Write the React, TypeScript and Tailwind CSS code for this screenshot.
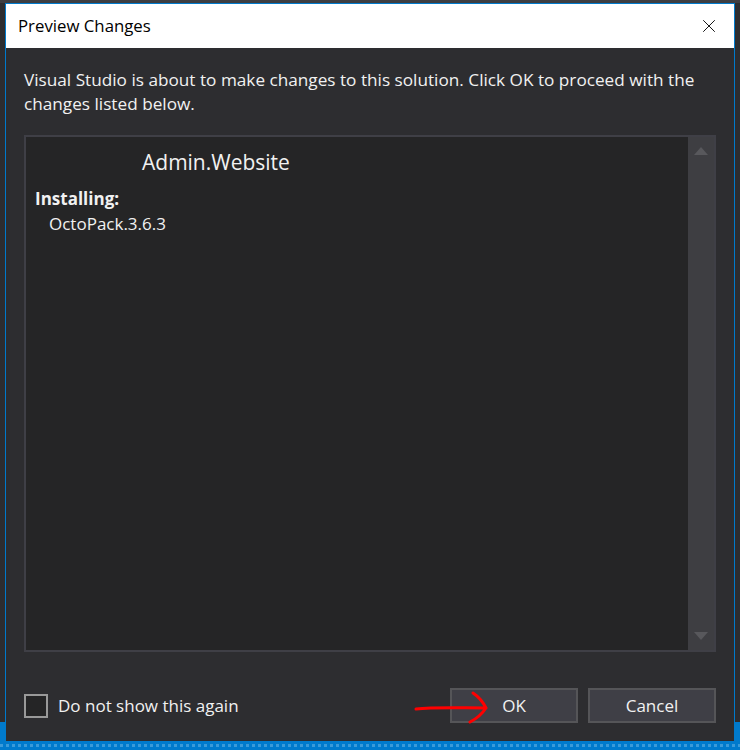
import { X } from "lucide-react";

const font = { fontFamily: '"Open Sans", "Noto Sans", sans-serif' };

function ScrollArrow({ down }: { down?: boolean }) {
  return (
    <svg width="14" height="8" viewBox="0 0 14 8" aria-hidden>
      <path d={down ? "M0 0 L14 0 L7 8 Z" : "M0 8 L14 8 L7 0 Z"} fill="#58585c" />
    </svg>
  );
}

export default function App() {
  return (
    <div
      className="relative h-[750px] w-[740px] overflow-hidden bg-[#2d2d30]"
      style={font}
    >
      {/* IDE behind the dialog */}
      <div className="absolute inset-x-0 top-0 h-[3px] bg-[#3e3e42]" />
      <div className="absolute bottom-0 left-0 right-0 h-[28px] bg-[#007acc]">
        <div className="absolute bottom-[3px] left-0 right-0 h-[3px] bg-[repeating-linear-gradient(90deg,#3a9ad9_0px,#3a9ad9_3px,#007acc_3px,#007acc_6px)]" />
      </div>

      <div className="relative ml-[5px] mt-[3px] flex h-[739px] w-[730px] flex-col border border-[#007acc]">
        {/* title bar */}
        <div className="flex h-[44px] shrink-0 items-center justify-between bg-white pl-[12px] pr-[14px]">
          <span className="text-[16.8px] text-black">Preview Changes</span>
          <X className="h-[22px] w-[22px] text-black" strokeWidth={1} />
        </div>

        {/* body */}
        <div className="flex flex-1 flex-col bg-[#2d2d30] px-[18px] pb-[18px] pt-[20px]">
          <p className="text-[17.2px] leading-[24px] text-[#f1f1f1]">
            Visual Studio is about to make changes to this solution. Click OK to proceed with the
            changes listed below.
          </p>

          <div className="mt-[19px] flex h-[517px] border-2 border-[#3f3f46] bg-[#252526]">
            <div className="flex-1 pt-[10px] text-[#f1f1f1]">
              <div className="pl-[116px] text-[21px] leading-[30px]">Admin.Website</div>
              <div className="mt-[10px] pl-[9px] text-[17px] font-bold leading-[24px]">
                Installing:
              </div>
              <div className="pl-[23px] text-[17px] leading-[26px]">OctoPack.3.6.3</div>
            </div>
            <div className="flex w-[26px] flex-col items-center justify-between bg-[#3e3e42] py-[10px]">
              <ScrollArrow />
              <ScrollArrow down />
            </div>
          </div>

          <div className="mt-auto flex items-center">
            <div className="flex items-center gap-[10px]">
              <div className="h-[24px] w-[24px] border-2 border-[#999999] bg-[#252526]" />
              <span className="text-[17px] text-[#f1f1f1]">Do not show this again</span>
            </div>
            <div className="relative ml-auto flex gap-[10px]">
              <button className="h-[35px] w-[128px] border-2 border-[#555558] bg-[#3f3f46] text-[17px] text-[#f1f1f1]">
                OK
              </button>
              <button className="h-[35px] w-[128px] border-2 border-[#555558] bg-[#3f3f46] text-[17px] text-[#f1f1f1]">
                Cancel
              </button>
              {/* red annotation arrow */}
              <svg
                className="absolute left-[-36px] top-[2px]"
                width="80"
                height="34"
                viewBox="0 0 80 34"
                aria-hidden
              >
                <path
                  d="M2 19 C20 17 45 18 72 18 M59 3 C65 7 69 12 72 18 C68 24 62 29 56 32"
                  fill="none"
                  stroke="#ff0000"
                  strokeWidth="3"
                  strokeLinecap="round"
                />
              </svg>
            </div>
          </div>
        </div>
      </div>
    </div>
  );
}
